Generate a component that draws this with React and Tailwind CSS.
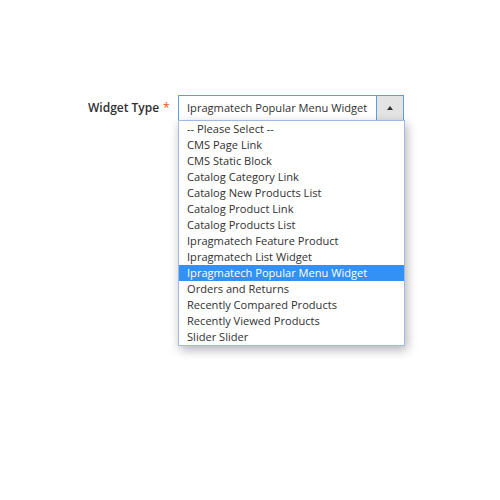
export default function App() {
  const items = [
    "-- Please Select --",
    "CMS Page Link",
    "CMS Static Block",
    "Catalog Category Link",
    "Catalog New Products List",
    "Catalog Product Link",
    "Catalog Products List",
    "Ipragmatech Feature Product",
    "Ipragmatech List Widget",
    "Ipragmatech Popular Menu Widget",
    "Orders and Returns",
    "Recently Compared Products",
    "Recently Viewed Products",
    "Slider Slider",
  ];
  return (
    <div className="w-[500px] h-[500px] bg-white relative" style={{ fontFamily: '"Open Sans", sans-serif' }}>
      <div className="absolute left-[88px] top-[100px] text-[12px] leading-[16px] font-semibold text-[#303030]">Widget Type</div>
      <div className="absolute left-[163px] top-[100px] text-[12px] leading-[16px] text-[#eb5202]">*</div>
      <div className="absolute left-[178px] top-[95px] w-[226px] h-[26px] flex border border-[#5a9de0] bg-white">
        <div className="flex-1 pl-[8px] text-[11.1px] leading-[24px] text-[#303030] whitespace-nowrap">Ipragmatech Popular Menu Widget</div>
        <div className="w-[27px] h-full border-l border-[#5a9de0] bg-[#e3e3e3] flex items-center justify-center">
          <div className="w-0 h-0 border-l-[3px] border-r-[3px] border-b-[4px] border-l-transparent border-r-transparent border-b-[#303030]"></div>
        </div>
      </div>
      <div className="absolute left-[178px] top-[120px] w-[227px] border border-[#9fbbe3] bg-white shadow-[2px_4px_10px_rgba(0,0,0,0.3)]">
        {items.map((t, i) => (
          <div
            key={t}
            className={
              "h-[16px] pl-[8px] text-[11.1px] leading-[16px] whitespace-nowrap " +
              (i === 9 ? "bg-[#3390f4] text-white" : "text-[#303030]")
            }
          >
            {t}
          </div>
        ))}
      </div>
    </div>
  );
}
